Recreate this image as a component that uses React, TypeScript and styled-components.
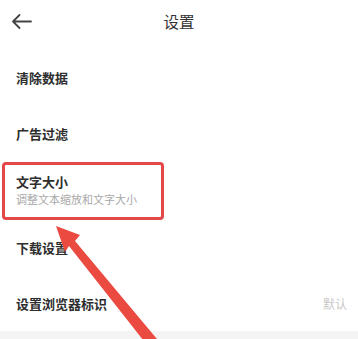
import React from "react";
import styled, { createGlobalStyle } from "styled-components";

const Global = createGlobalStyle`
  html, body { margin: 0; padding: 0; background: #ffffff; }
  body { font-family: "Noto Sans CJK SC", "Noto Sans", sans-serif; }
`;

const Page = styled.div`
  position: relative;
  width: 358px;
  height: 339px;
  overflow: hidden;
  background: #ffffff;
  display: flex;
  flex-direction: column;
`;

const Header = styled.div`
  height: 42px;
  display: grid;
  grid-template-columns: 48px 1fr 48px;
  align-items: center;
`;

const BackButton = styled.div`
  display: flex;
  align-items: center;
  padding-left: 11px;
  height: 42px;
`;

const Title = styled.div`
  text-align: center;
  font-size: 15.5px;
  color: #333333;
  line-height: 42px;
`;

const List = styled.div`
  display: flex;
  flex-direction: column;
  margin-top: 7px;
`;

const Row = styled.div<{ $tall?: boolean }>`
  position: relative;
  height: ${(p) => (p.$tall ? 58 : 56)}px;
  padding: 0 11px 0 16px;
  display: flex;
  align-items: center;
  justify-content: space-between;
`;

const TextBlock = styled.div`
  display: flex;
  flex-direction: column;
  gap: 2px;
`;

const Label = styled.div`
  font-size: 13px;
  font-weight: 700;
  color: #2e2e2e;
  line-height: 17px;
`;

const Sub = styled.div`
  font-size: 11px;
  color: #a8a8a8;
  line-height: 15px;
`;

const Value = styled.div`
  font-size: 12px;
  color: #c9c9c9;
`;

const Highlight = styled.div`
  position: absolute;
  left: 2px;
  top: 1px;
  width: 156px;
  height: 52px;
  border: 3px solid #e5484a;
  border-radius: 4px;
  pointer-events: none;
`;

const Footer = styled.div`
  flex: 1;
  background: #f4f4f4;
`;

const ArrowLayer = styled.svg`
  position: absolute;
  left: 0;
  top: 0;
  width: 358px;
  height: 339px;
  pointer-events: none;
`;

export default function App() {
  return (
    <>
      <Global />
      <Page>
        <Header>
          <BackButton>
            <svg width="21" height="15" viewBox="0 0 21 15" fill="none">
              <path d="M20 7.5H2M8.5 1L2 7.5L8.5 14" stroke="#444" strokeWidth="1.8" strokeLinecap="round" strokeLinejoin="round" />
            </svg>
          </BackButton>
          <Title>设置</Title>
          <div />
        </Header>
        <List>
          <Row>
            <Label>清除数据</Label>
          </Row>
          <Row>
            <Label>广告过滤</Label>
          </Row>
          <Row $tall>
            <TextBlock>
              <Label>文字大小</Label>
              <Sub>调整文本缩放和文字大小</Sub>
            </TextBlock>
            <Highlight />
          </Row>
          <Row>
            <Label>下载设置</Label>
          </Row>
          <Row>
            <Label>设置浏览器标识</Label>
            <Value>默认</Value>
          </Row>
        </List>
        <Footer />
        <ArrowLayer viewBox="0 0 358 339">
          <polygon
            points="56,226 80,235 75,241 162,345 147,345 69,246 65,252"
            fill="#ea4a3f"
          />
        </ArrowLayer>
      </Page>
    </>
  );
}
